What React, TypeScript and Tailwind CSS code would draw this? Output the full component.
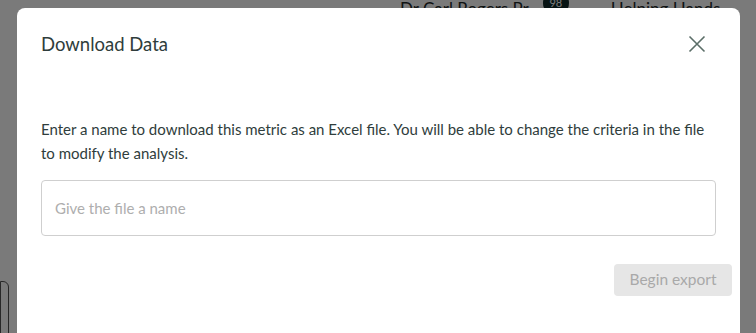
import { useState } from 'react';

const font = { fontFamily: 'Lato, "Open Sans", sans-serif' };

const App = () => {
  const [name, setName] = useState('');

  return (
    <div className="relative h-[333px] w-[756px] overflow-hidden bg-white" style={font}>
      {/* Page behind the modal */}
      <div className="flex h-[40px] items-start text-[17px] text-[#1f2a2a]">
        <div className="ml-[400px] mt-[-4px] flex items-center">
          <span>Dr Carl Rogers Pr</span>
          <span className="ml-[14px] mt-[-12px] flex h-[26px] w-[26px] items-end justify-center rounded-full bg-[#0f2b2b] pb-[4px] text-[11px] text-white">
            98
          </span>
        </div>
        <span className="ml-[42px] mt-[-4px]">Helping Hands</span>
      </div>
      <div className="mt-[241px] h-[80px] w-[9px] rounded-tr-md border border-[#555] bg-white" />

      {/* Overlay */}
      <div className="absolute inset-0 bg-[#000000]/[0.52]" />

      {/* Modal */}
      <div className="absolute left-[17px] top-[8px] h-[345px] w-[723px] rounded-[8px] bg-white text-[#2f3d3c]">
        <div className="flex h-[72px] items-center justify-between pl-6 pr-[34px]">
          <h2 className="text-[18.5px] leading-none">Download Data</h2>
          <button type="button" className="text-[#5b6e68]">
            <svg width="18" height="18" viewBox="0 0 18 18" fill="none" stroke="currentColor" strokeWidth="1.6">
              <path d="M1.5 1.5 L16.5 16.5 M16.5 1.5 L1.5 16.5" />
            </svg>
          </button>
        </div>

        <div className="px-6 pt-[37px]">
          <p className="max-w-[664px] text-[15px] leading-[24px]">
            Enter a name to download this metric as an Excel file. You will be able to change the criteria in the file
            to modify the analysis.
          </p>
          <input
            type="text"
            value={name}
            onChange={(e) => setName(e.target.value)}
            placeholder="Give the file a name"
            className="mt-[15px] h-[56px] w-full rounded-[4px] border border-[#cfcfcf] px-[13px] text-[15px] outline-none placeholder:text-[#aeaeae]"
          />
        </div>

        <div className="flex justify-end pr-2 pt-[28px]">
          <button
            type="button"
            disabled={!name}
            className="h-[32px] w-[118px] rounded-[4px] bg-[#e6e6e6] text-[15.5px] text-[#a9a9a9]"
          >
            Begin export
          </button>
        </div>
      </div>
    </div>
  );
};

export default App;
